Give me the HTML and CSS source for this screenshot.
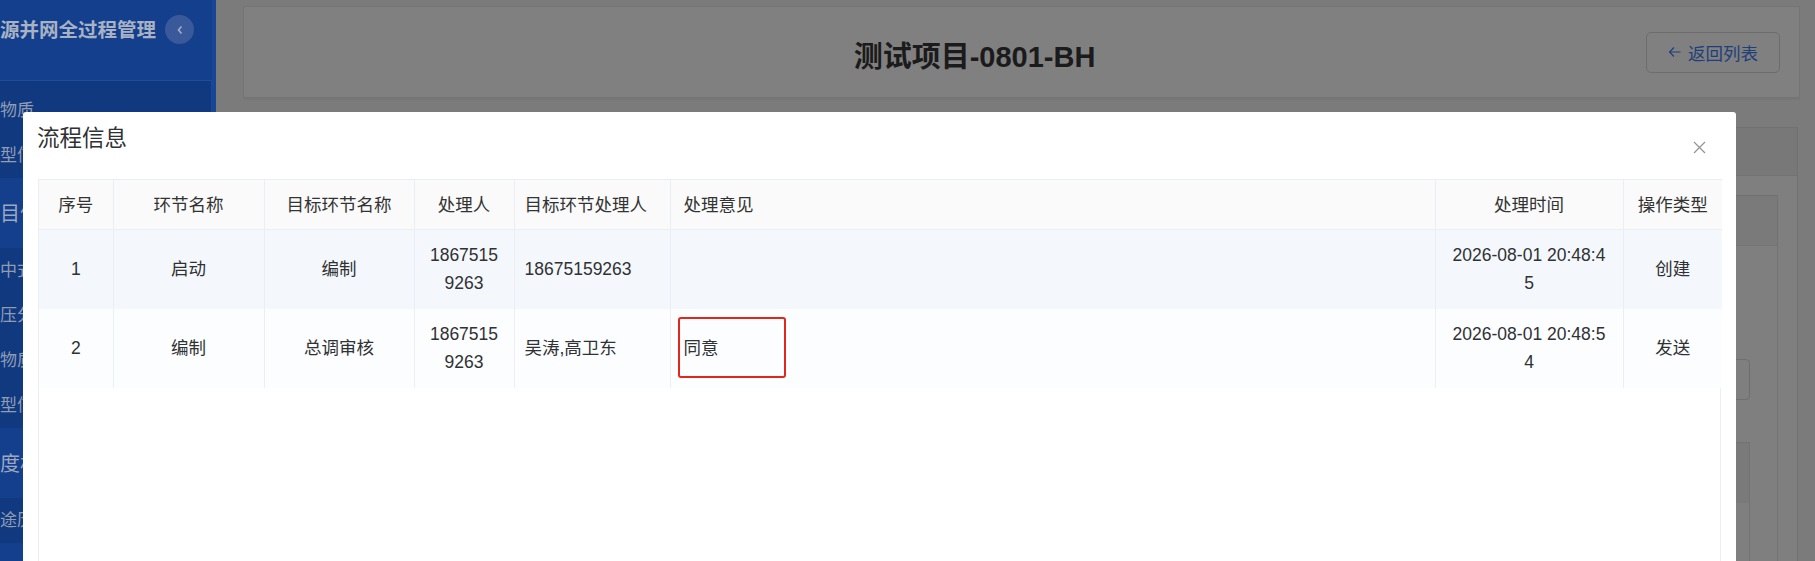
FILE: index.html
```html
<!DOCTYPE html>
<html lang="zh-CN">
<head>
<meta charset="utf-8">
<title>流程信息</title>
<link rel="stylesheet" href="styles.css">
</head>
<body>
<div class="app">
  <aside class="sidebar">
    <div class="brand">
      <span class="brand-text">源并网全过程管理</span>
      <span class="collapse-btn">
        <svg width="8" height="10" viewBox="0 0 8 10"><path d="M5.5 1.5 L2.5 5 L5.5 8.5" fill="none" stroke="#a3afc7" stroke-width="1.6"/></svg>
      </span>
    </div>
    <nav class="menu">
      <div class="group first">
        <div class="item">物质</div>
        <div class="item">型信</div>
      </div>
      <div class="section">目信</div>
      <div class="group">
        <div class="item">中式</div>
        <div class="item">压分</div>
        <div class="item">物质</div>
        <div class="item">型信</div>
      </div>
      <div class="section">度材</div>
      <div class="group">
        <div class="item">途历</div>
      </div>
    </nav>
  </aside>

  <main class="main">
    <header class="page-head">
      <h1 class="page-title">测试项目-0801-BH</h1>
      <button class="back-btn" type="button">
        <svg width="13" height="12" viewBox="0 0 13 12"><path d="M6 1.5 L1.5 6 L6 10.5 M1.5 6 H12.5" fill="none" stroke="currentColor" stroke-width="1.2"/></svg>
        <span>返回列表</span>
      </button>
    </header>
    <section class="panel">
      <div class="panel-tabs"></div>
      <div class="panel-body">
        <div class="inner-card">
          <div class="inner-head"></div>
          <div class="inner-body">
            <div class="tick"></div>
            <div class="field"></div>
            <div class="sub-card"><div class="sub-head"></div></div>
          </div>
        </div>
      </div>
    </section>
  </main>
</div>

<div class="dialog">
  <div class="dialog-head">
    <span class="dialog-title">流程信息</span>
    <span class="dialog-close">
      <svg width="13" height="13" viewBox="0 0 13 13"><path d="M1 1 L12 12 M12 1 L1 12" fill="none" stroke="#909399" stroke-width="1.2"/></svg>
    </span>
  </div>
  <div class="dialog-body">
    <div class="table-wrap">
      <table class="flow-table">
        <colgroup>
          <col class="c-no"><col class="c-node"><col class="c-target"><col class="c-user">
          <col class="c-tuser"><col class="c-opinion"><col class="c-time"><col class="c-type">
        </colgroup>
        <thead>
          <tr>
            <th>序号</th>
            <th>环节名称</th>
            <th>目标环节名称</th>
            <th class="user">处理人</th>
            <th class="left">目标环节处理人</th>
            <th class="left opinion">处理意见</th>
            <th class="time">处理时间</th>
            <th>操作类型</th>
          </tr>
        </thead>
        <tbody>
          <tr class="row-a">
            <td>1</td>
            <td>启动</td>
            <td>编制</td>
            <td class="user">18675159263</td>
            <td class="left">18675159263</td>
            <td class="left opinion"></td>
            <td class="time">2026-08-01 20:48:45</td>
            <td>创建</td>
          </tr>
          <tr class="row-b">
            <td>2</td>
            <td>编制</td>
            <td>总调审核</td>
            <td class="user">18675159263</td>
            <td class="left">吴涛,高卫东</td>
            <td class="left opinion">同意<span class="highlight"></span></td>
            <td class="time">2026-08-01 20:48:54</td>
            <td>发送</td>
          </tr>
        </tbody>
      </table>
    </div>
  </div>
</div>
</body>
</html>
```

FILE: styles.css
```css
* { box-sizing: border-box; }

html, body {
  margin: 0;
  padding: 0;
  width: 1815px;
  height: 561px;
  overflow: hidden;
  font-family: "Liberation Sans", "Noto Sans CJK SC", sans-serif;
}

.app {
  display: flex;
  height: 561px;
}

/* ---------- sidebar ---------- */
.sidebar {
  width: 216px;
  flex: none;
  background: #143f8c;
  overflow: hidden;
  border-right: 4px solid #184595;
}

.brand {
  height: 81px;
  padding-top: 15px;
  display: flex;
  align-items: flex-start;
  border-bottom: 1px solid #1f4c98;
  white-space: nowrap;
}

.brand-text {
  display: block;
  height: 30px;
  line-height: 30px;
  font-size: 19.5px;
  font-weight: bold;
  color: #a9b2c4;
  flex: none;
}

.collapse-btn {
  width: 29px;
  height: 29px;
  margin-left: 9px;
  border-radius: 50%;
  background: #39599a;
  display: flex;
  align-items: center;
  justify-content: center;
  flex: none;
}

.menu {
  border-right: 1px solid #1d4893;
}

.group {
  background: #11397f;
}

.group.first {
  padding-top: 7px;
}

.item {
  height: 45px;
  line-height: 45px;
  font-size: 17px;
  color: #8f9cb6;
  white-space: nowrap;
}

.section {
  height: 70px;
  line-height: 72px;
  font-size: 20px;
  color: #9ba8c0;
  background: #143f8c;
  white-space: nowrap;
}

/* ---------- main area (under the mask) ---------- */
.main {
  flex: 1;
  background: #7b7b7b;
  padding: 6px 15px 0 27px;
  overflow: hidden;
}

.page-head {
  height: 92px;
  background: #808080;
  border: 1px solid #747474;
  border-radius: 2px;
  box-shadow: 0 2px 0 #777;
  display: flex;
  align-items: center;
  padding: 0 19px 0 80px;
  gap: 21px;
}

.page-title {
  flex: 1;
  margin: 0;
  text-align: center;
  font-size: 29px;
  font-weight: bold;
  color: #1b1b1b;
  padding-top: 4px;
}

.back-btn {
  width: 134px;
  height: 41px;
  border: 1px solid #6d6d6d;
  border-radius: 5px;
  background: #808080;
  color: #1f3f7a;
  font-family: inherit;
  font-size: 17.5px;
  display: flex;
  align-items: center;
  justify-content: center;
  gap: 7px;
  padding: 0;
}

.panel {
  margin: 29px 2px 0 0;
  height: 500px;
  border: 1px solid #717171;
  background: #7f7f7f;
}

.panel-tabs {
  height: 48px;
  background: #787878;
  border-bottom: 1px solid #727272;
}

.panel-body {
  padding: 19px 19px 0 20px;
}

.inner-card {
  height: 420px;
  border: 1px solid #727272;
  background: #7f7f7f;
}

.inner-head {
  height: 50px;
  background: #7a7a7a;
  border-bottom: 1px solid #747474;
}

.inner-body {
  padding: 54px 27px 0 20px;
}

.tick {
  width: 6px;
  height: 2px;
  margin-left: auto;
  margin-right: 14px;
  background: #5e5e5e;
}

.field {
  height: 41px;
  margin-top: 57px;
  border: 1px solid #6e6e6e;
  border-radius: 4px;
}

.sub-card {
  margin-top: 42px;
  height: 200px;
  border: 1px solid #737373;
}

.sub-head {
  height: 60px;
  background: #7a7a7a;
}

/* ---------- dialog ---------- */
.dialog {
  position: absolute;
  left: 23px;
  top: 112px;
  width: 1713px;
  height: 520px;
  background: #fff;
  border-radius: 3px;
}

.dialog-head {
  display: flex;
  justify-content: space-between;
  padding: 12px 30px 0 14px;
  height: 67px;
}

.dialog-title {
  font-size: 22.5px;
  line-height: 30px;
  color: #303133;
}

.dialog-close {
  margin-top: 17px;
  width: 13px;
  height: 13px;
  display: block;
}

.dialog-close svg { display: block; }

.dialog-body {
  padding: 0 15px 0 15px;
}

.table-wrap {
  height: 460px;
  border-left: 1px solid #ebeef5;
  border-right: 1px solid #ebeef5;
}

.flow-table {
  width: 100%;
  table-layout: fixed;
  border-collapse: collapse;
  font-size: 17.5px;
  color: #303133;
}

.c-no { width: 74px; }
.c-node { width: 151px; }
.c-target { width: 150px; }
.c-user { width: 100px; }
.c-tuser { width: 156px; }
.c-opinion { width: 765px; }
.c-time { width: 188px; }
.c-type { width: 99px; }

.flow-table thead tr { height: 50px; }
.flow-table tbody tr { height: 79px; }

.flow-table th,
.flow-table td {
  padding: 0 10px;
  text-align: center;
  vertical-align: middle;
  line-height: 28px;
  border-right: 1px solid #ebeef5;
  word-break: break-all;
  font-weight: normal;
}

.flow-table th {
  background: #fafafa;
  color: #333;
  border-top: 1px solid #ebeef5;
  border-bottom: 1px solid #ebeef5;
  white-space: nowrap;
}

.flow-table th:last-child,
.flow-table td:last-child { border-right: none; }

.flow-table .left { text-align: left; }
.flow-table .opinion { padding-left: 13px; }
.flow-table .user { padding: 0 14px; }
.flow-table .time { padding: 0 14px; }

.row-a td { background: #f4f8fd; }
.row-b td { background: #fbfdff; }

.flow-table td.opinion { position: relative; }

.highlight {
  position: absolute;
  left: 7px;
  top: 8px;
  width: 108px;
  height: 61px;
  border: 2px solid #e3261b;
  border-radius: 3px;
}
```
